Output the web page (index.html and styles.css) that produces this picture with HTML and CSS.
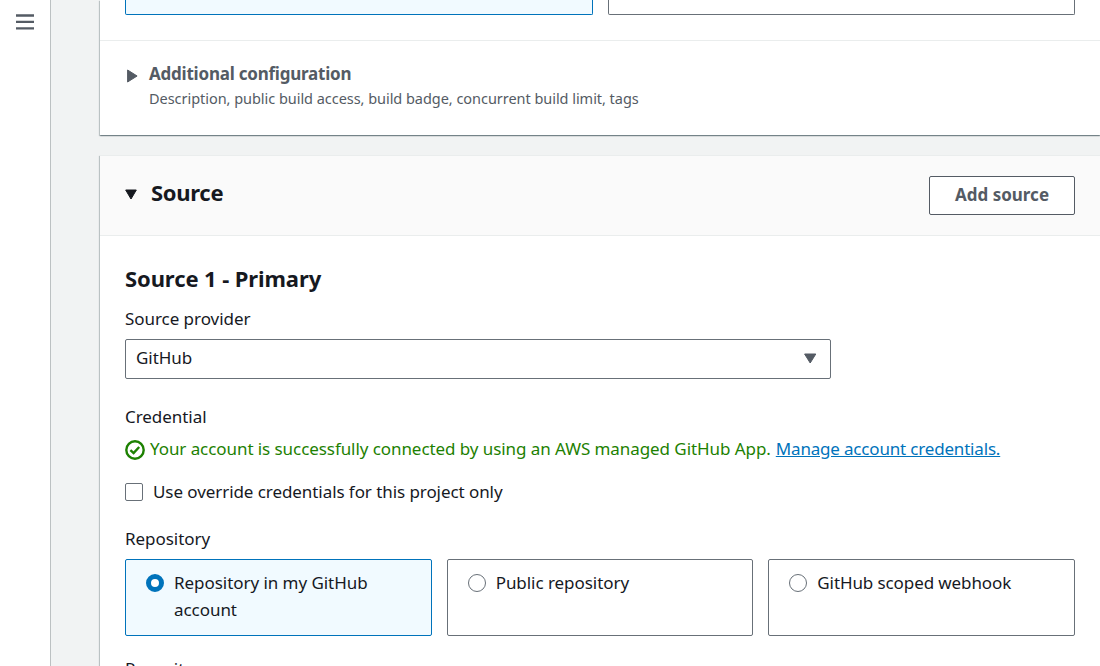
FILE: index.html
```html
<!DOCTYPE html>
<html lang="en">
<head>
<meta charset="utf-8">
<title>Create build project</title>
<link rel="stylesheet" href="styles.css">
</head>
<body>
<div class="app">
  <nav class="rail">
    <svg class="menu" width="18" height="16" viewBox="0 0 18 16"><path d="M0 1.5h18M0 7.9h18M0 14.3h18" stroke="#545b64" stroke-width="2.3"/></svg>
  </nav>
  <main class="main">
    <section class="panel project">
      <div class="tiles tiles-two">
        <div class="tile tile-selected"></div>
        <div class="tile"></div>
      </div>
      <div class="additional">
        <svg class="arrow" width="12" height="14" viewBox="0 0 12 14"><path d="M1.6 1l9.5 6-9.5 6z" fill="#545b64" stroke="#545b64" stroke-linejoin="round"/></svg>
        <div>
          <h3 class="additional-title">Additional configuration</h3>
          <p class="additional-desc">Description, public build access, build badge, concurrent build limit, tags</p>
        </div>
      </div>
    </section>
    <section class="panel source">
      <header class="source-header">
        <svg class="caret" width="13" height="11" viewBox="0 0 13 11"><path d="M.7 1h10.6L6 10z" fill="#16191f" stroke="#16191f" stroke-linejoin="round"/></svg>
        <h2 class="heading source-title">Source</h2>
        <button class="button">Add source</button>
      </header>
      <div class="source-body">
        <h2 class="heading primary-title">Source 1 - Primary</h2>
        <label class="label l-provider">Source provider</label>
        <div class="select">
          <span class="t-github">GitHub</span>
          <svg class="select-arrow" width="13" height="11" viewBox="0 0 13 11"><path d="M.6 1h11.2L6.2 10z" fill="#545b64" stroke="#545b64" stroke-linejoin="round"/></svg>
        </div>
        <label class="label l-credential">Credential</label>
        <div class="status">
          <svg width="20" height="20" viewBox="0 0 20 20" fill="none" stroke="#1d8102" stroke-width="2.4"><circle cx="10" cy="10" r="8.7"/><path d="M5.4 10.1l3.2 3 5.6-6.1"/></svg>
          <span class="status-text">Your account is successfully connected by using an AWS managed GitHub App.</span>
          <a class="link" href="#">Manage account credentials.</a>
        </div>
        <div class="override">
          <span class="checkbox"></span>
          <span class="t-override">Use override credentials for this project only</span>
        </div>
        <label class="label l-repository">Repository</label>
        <div class="tiles tiles-three">
          <div class="tile tile-selected"><span class="radio radio-on"></span><span class="t-mine">Repository in my GitHub account</span></div>
          <div class="tile"><span class="radio"></span><span class="t-public">Public repository</span></div>
          <div class="tile"><span class="radio"></span><span class="t-webhook">GitHub scoped webhook</span></div>
        </div>
        <label class="label l-last">Repository</label>
      </div>
    </section>
  </main>
</div>
</body>
</html>
```
FILE: styles.css
```css
* { box-sizing: border-box; }
body {
  margin: 0;
  height: 666px;
  overflow: hidden;
  background: #f1f3f3;
  color: #16191f;
  font: 17px/27px "Noto Sans", sans-serif;
  letter-spacing: -.05px;
}
h2, h3, p { margin: 0; }
svg { display: block; flex: none; }
span, a, label, h2, h3, p { white-space: nowrap; }

.app { display: flex; height: 666px; overflow: hidden; }
.rail {
  flex: none;
  width: 51px;
  padding: 14px 0 0 16px;
  background: #fff;
  border-right: 1px solid #bcc1c2;
}
.main { flex: 1; min-width: 0; padding-left: 49px; }
.panel {
  background: #fff;
  box-shadow: 0 1px 1px 0 rgba(0, 28, 36, .3), 1px 1px 1px 0 rgba(0, 28, 36, .15), -1px 1px 1px 0 rgba(0, 28, 36, .18);
}

.project { height: 135px; }
.tiles { display: grid; gap: 15px; }
.tiles-two { grid-template-columns: 1fr 1fr; height: 41px; padding: 0 25px 25px; border-bottom: 1px solid #eaeded; }
.tiles-three { grid-template-columns: repeat(3, 1fr); height: 77px; margin-top: 7px; }
.tile {
  display: flex;
  gap: 10px;
  padding: 9px 20px 10px;
  border: 1px solid #687078;
  border-radius: 2px;
  background: #fff;
}
.tiles-two .tile { border-top: 0; border-radius: 0 0 2px 2px; padding: 0; }
.tile-selected { background: #f1faff; border-color: #0073bb; }

.additional { display: flex; padding: 20px 0 0 26px; color: #545b64; }
.arrow { margin: 8px 11px 0 0; }
.additional-title { font-size: 17px; line-height: 26px; font-weight: 700; letter-spacing: -.22px; }
.additional-desc { font-size: 14.5px; line-height: 22px; letter-spacing: -.04px; }

.source { height: 560px; margin-top: 20px; }
.source-header {
  display: flex;
  align-items: center;
  height: 81px;
  padding: 0 25px;
  background: #fafafa;
  border-top: 1px solid #eaeded;
  border-bottom: 1px solid #eaeded;
}
.heading { font-size: 22px; line-height: 30px; font-weight: 700; letter-spacing: -.1px; }
.caret { margin: 0 13px 2px 0; }
.source-title { margin-bottom: 8px; letter-spacing: -.3px; }
.button {
  width: 146px;
  height: 39px;
  margin-left: auto;
  padding: 0 0 2px;
  border: 1px solid #545b64;
  border-radius: 2px;
  background: #fff;
  color: #545b64;
  font: 700 17px/27px "Noto Sans", sans-serif;
}
.source-body { padding: 27px 25px 0; }
.label { display: block; }
.l-provider { margin-top: 12px; }
.select {
  display: flex;
  align-items: center;
  justify-content: space-between;
  width: 706px;
  height: 40px;
  margin-top: 7px;
  padding: 0 13px 3px 10px;
  border: 1px solid #687078;
  border-radius: 2px;
}
.select-arrow { margin-top: 2px; }
.l-credential { margin-top: 24px; }
.status { display: flex; align-items: center; margin-top: 5px; color: #1d8102; }
.status svg { margin: 2px 5px 0 0; }
.status-text { letter-spacing: -.07px; }
.link { margin-left: 5px; color: #0073bb; text-decoration: underline; letter-spacing: -.18px; }
.override { display: flex; align-items: center; margin-top: 16px; }
.checkbox { width: 18px; height: 18px; margin: 0 10px 0 0; border: 1px solid #687078; border-radius: 2px; }
.t-override { letter-spacing: -.07px; }
.l-repository { margin-top: 20px; }
.radio { flex: none; width: 18px; height: 18px; margin-top: 5px; border: 1px solid #687078; border-radius: 50%; background: #fff; }
.radio-on { border: 5px solid #0073bb; }
.t-mine { white-space: normal; }
.t-webhook { letter-spacing: -.1px; }
.l-last { margin-top: 19px; }
```
